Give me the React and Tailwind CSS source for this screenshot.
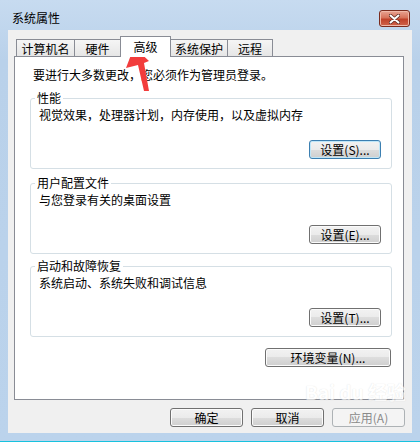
import React from 'react';

const font = { fontFamily: '"Noto Sans CJK SC", "Liberation Sans", sans-serif' };

function WinButton({ children, primary, disabled, className = '' }) {
  const base = 'h-[19px] rounded-[3px] border text-[12px] leading-[14px] flex items-center justify-center';
  if (disabled) {
    return (
      <button className={`${base} border-[#adb2b5] bg-[#f4f4f4] text-[#8a8a8a] ${className}`}>{children}</button>
    );
  }
  return (
    <button
      className={`${base} text-black bg-[linear-gradient(#f2f2f2_0%,#ebebeb_50%,#dddddd_50%,#cfcfcf_100%)] ${
        primary
          ? 'border-[#3c7fb1] shadow-[inset_0_0_0_1px_#bfe6f8]'
          : 'border-[#707070] shadow-[inset_0_0_0_1px_#fbfbfb]'
      } ${className}`}
    >
      {children}
    </button>
  );
}

function Group({ title, desc, btn, primary, className = '' }) {
  return (
    <fieldset className={`ml-[15px] mr-[11px] border border-[#d5dfe5] rounded-[3px] ${className}`}>
      <legend className="ml-[4px] px-[2px] text-[12px] leading-[14px]">{title}</legend>
      <div className="pl-[8px] pt-[3px] text-[12px] leading-[14px]">{desc}</div>
      <div className="flex justify-end pr-[10px] pt-[18px] pb-[9px]">
        <WinButton primary={primary} className="w-[72px]">{btn}</WinButton>
      </div>
    </fieldset>
  );
}

const tabs = [
  { name: '计算机名', w: 'w-[59px]' },
  { name: '硬件', w: 'w-[47px]' },
  { name: '高级', w: 'w-[51px]', active: true },
  { name: '系统保护', w: 'w-[58px]' },
  { name: '远程', w: 'w-[46px]' },
];

export default function App() {
  return (
    <div
      style={font}
      className="relative w-[420px] h-[442px] overflow-hidden bg-[linear-gradient(#c7dbf0,#b9d1ea_60px,#bbd3ec)] border-b border-[#17c2de] text-black"
    >
      {/* title bar */}
      <div className="h-[30px] flex justify-between">
        <div className="pl-[12px] pt-[11px] text-[12px] leading-[14px] text-black">系统属性</div>
        <div className="mt-[10px] mr-[10px] w-[31px] h-[17px] rounded-[3px] border border-[#7a2b1d] bg-[linear-gradient(#e8a493_0%,#d7735b_45%,#c0422a_55%,#d0634a_100%)] flex items-center justify-center shadow-[inset_0_0_0_1px_#f0b8a8]">
          <svg width="11" height="10" viewBox="0 0 11 10">
            <path d="M1.5 1.5 L9.5 8.5 M9.5 1.5 L1.5 8.5" stroke="#5b2a22" strokeWidth="3.6" strokeLinecap="round" />
            <path d="M1.5 1.5 L9.5 8.5 M9.5 1.5 L1.5 8.5" stroke="#ffffff" strokeWidth="2" strokeLinecap="round" />
          </svg>
        </div>
      </div>

      {/* client area */}
      <div className="mx-[8px] h-[403px] bg-[#f0f0f0]">
        <div className="h-[26px] pl-[8px] flex items-end">
          {tabs.map((t) =>
            t.active ? (
              <div
                key={t.name}
                className={`${t.w} h-[21px] -mb-px relative z-10 -ml-px border border-b-0 border-[#898c95] bg-white text-[12px] leading-[14px] flex items-center justify-center`}
              >
                {t.name}
              </div>
            ) : (
              <div
                key={t.name}
                className={`${t.w} h-[17px] -ml-px first:ml-0 border border-b-0 border-[#898c95] bg-[linear-gradient(#f5f5f5,#e6e6e6)] text-[12px] leading-[14px] flex items-center justify-center pt-[1px]`}
              >
                {t.name}
              </div>
            )
          )}
        </div>

        <div className="ml-[6px] w-[390px] h-[344px] border border-[#898c95] bg-white">
          <div className="pl-[18px] pt-[11px] text-[12px] leading-[14px]">要进行大多数更改，您必须作为管理员登录。</div>
          <Group className="mt-[9px]" title="性能" desc="视觉效果，处理器计划，内存使用，以及虚拟内存" btn="设置(S)..." primary />
          <Group className="mt-[7px]" title="用户配置文件" desc="与您登录有关的桌面设置" btn="设置(E)..." />
          <Group className="mt-[5px]" title="启动和故障恢复" desc="系统启动、系统失败和调试信息" btn="设置(T)..." />
          <div className="flex justify-end mr-[12px] mt-[11px]">
            <WinButton className="w-[126px]">环境变量(N)...</WinButton>
          </div>
        </div>

        <div className="mt-[8px] flex justify-end gap-[8px] pr-[7px]">
          <WinButton className="w-[73px]">确定</WinButton>
          <WinButton className="w-[73px]">取消</WinButton>
          <WinButton disabled className="w-[73px]">应用(A)</WinButton>
        </div>
      </div>

      {/* annotation arrow */}
      <svg className="absolute left-0 top-0 pointer-events-none" width="420" height="442">
        <polygon points="134,47 149,61 144,63 149,91 144,91 138,65 126,68" fill="#f23c3c" />
      </svg>

      {/* faint watermark */}
      <div className="absolute left-[305px] top-[382px] pointer-events-none text-white opacity-60 text-[19px] leading-[20px] font-bold [text-shadow:0_0_1px_#c8c8c8]">
        Bai du 经验
      </div>
    </div>
  );
}
